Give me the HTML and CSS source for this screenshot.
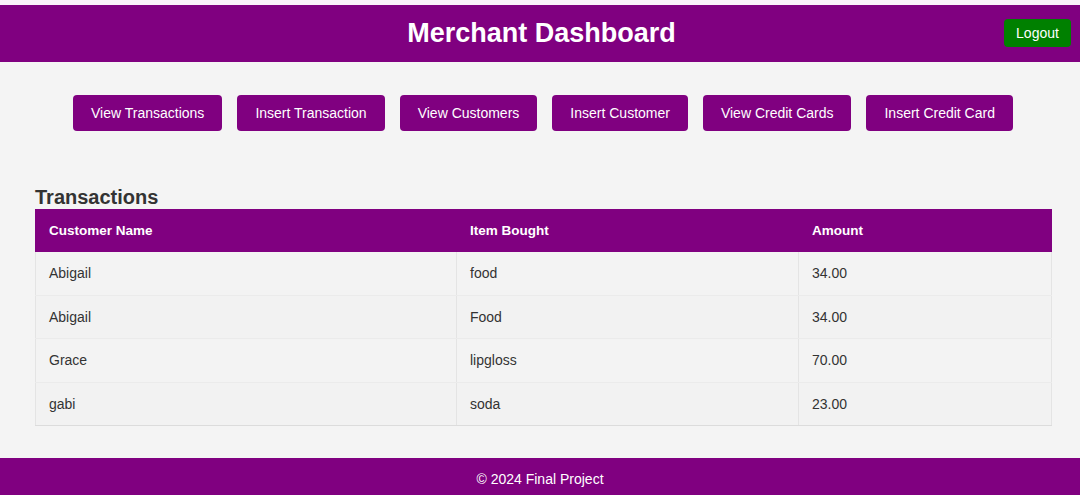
FILE: index.html
```html
<!DOCTYPE html>
<html lang="en">
<head>
<meta charset="utf-8">
<title>Merchant Dashboard</title>
<link rel="stylesheet" href="styles.css">
</head>
<body>
<header class="topbar">
  <h1 class="title">Merchant Dashboard</h1>
  <button class="logout">Logout</button>
</header>
<nav class="actions">
  <button class="action">View Transactions</button>
  <button class="action">Insert Transaction</button>
  <button class="action">View Customers</button>
  <button class="action">Insert Customer</button>
  <button class="action">View Credit Cards</button>
  <button class="action">Insert Credit Card</button>
</nav>
<main class="content">
  <h2 class="section-title">Transactions</h2>
  <table class="data">
    <colgroup>
      <col class="c1"><col class="c2"><col class="c3">
    </colgroup>
    <thead>
      <tr><th>Customer Name</th><th>Item Bought</th><th>Amount</th></tr>
    </thead>
    <tbody>
      <tr><td>Abigail</td><td>food</td><td>34.00</td></tr>
      <tr><td>Abigail</td><td>Food</td><td>34.00</td></tr>
      <tr><td>Grace</td><td>lipgloss</td><td>70.00</td></tr>
      <tr><td>gabi</td><td>soda</td><td>23.00</td></tr>
    </tbody>
  </table>
</main>
<footer class="footer">© 2024 Final Project</footer>
</body>
</html>
```
FILE: styles.css
```css
* { box-sizing: border-box; }
html, body { margin: 0; padding: 0; }
body {
  background: #f4f4f4;
  font-family: "Liberation Sans", Arial, sans-serif;
  color: #333;
  padding-top: 5px;
  background-image: linear-gradient(#fbf1fb, #fbf1fb);
  background-size: 100% 5px;
  background-repeat: no-repeat;
}
.topbar {
  position: relative;
  background: #800080;
  height: 57px;
  display: flex;
  align-items: center;
  justify-content: center;
}
.title {
  margin: 0;
  color: #fff;
  font-size: 27px;
  font-weight: bold;
  line-height: 1;
  padding-left: 3px;
}
.logout {
  position: absolute;
  right: 9px;
  top: 14px;
  height: 28px;
  width: 67px;
  background: #008000;
  color: #fff;
  border: none;
  border-radius: 4px;
  font-family: inherit;
  font-size: 14px;
  padding: 0;
}
.actions {
  display: flex;
  justify-content: center;
  gap: 15px;
  margin-top: 33px;
  padding-left: 6px;
}
.action {
  height: 36px;
  padding: 0 18px;
  background: #800080;
  color: #fff;
  border: none;
  border-radius: 4px;
  font-family: inherit;
  font-size: 14px;
}
.content {
  padding: 0 29px 0 35px;
  margin-top: 54px;
}
.section-title {
  margin: 0;
  font-size: 20px;
  line-height: 24px;
  font-weight: bold;
  color: #333;
}
.data {
  width: 1016px;
  border-collapse: collapse;
  table-layout: fixed;
  background: #f3f3f3;
  font-size: 14px;
}
.c1 { width: 421px; }
.c2 { width: 342px; }
.c3 { width: 253px; }
.data th {
  background: #800080;
  color: #fff;
  text-align: left;
  font-size: 13.5px;
  font-weight: bold;
  padding: 11px 13px;
  line-height: 19px;
  border: 1px solid #800080;
  border-left: 1px solid #9b3a9b;
}
.data th:first-child { border-left-color: #800080; }
.data td {
  padding: 12px 13px;
  line-height: 18.5px;
  border: 1px solid #e4e4e4;
  border-top: none;
  color: #333;
}
.data tbody tr:nth-child(odd) td { background: #f3f3f3; }
.data tbody tr:nth-child(even) td { background: #f2f2f2; }
.data tbody tr td { border-bottom-color: #ebebeb; }
.data tbody tr:last-child td { border-bottom-color: #dcdcdc; }
.footer {
  margin-top: 32px;
  background: #800080;
  color: #fff;
  text-align: center;
  font-size: 14px;
  padding: 13px 0 10px;
  line-height: 16px;
}
```
